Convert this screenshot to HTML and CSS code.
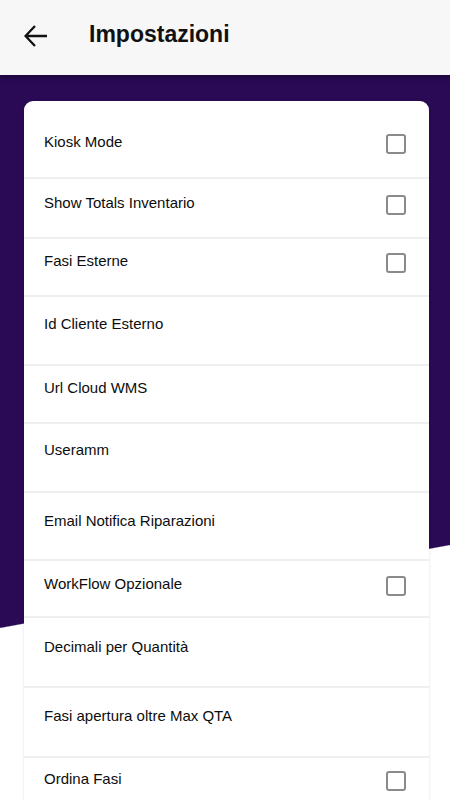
FILE: index.html
```
<!DOCTYPE html>
<html lang="it">
<head>
<meta charset="utf-8">
<title>Impostazioni</title>
<link rel="stylesheet" href="styles.css">
</head>
<body>
<header class="topbar">
  <svg class="back" width="24" height="24" viewBox="0 0 24 24" aria-hidden="true">
    <path d="M1.5 12H23M11 2L1.5 12L11 22" fill="none" stroke="#111" stroke-width="2.3"/>
  </svg>
  <h1 class="title">Impostazioni</h1>
</header>
<main class="main">
  <section class="card">
    <div class="row"><span class="label">Kiosk Mode</span><span class="check"></span></div>
    <div class="row"><span class="label">Show Totals Inventario</span><span class="check"></span></div>
    <div class="row"><span class="label">Fasi Esterne</span><span class="check"></span></div>
    <div class="row"><span class="label">Id Cliente Esterno</span></div>
    <div class="row"><span class="label">Url Cloud WMS</span></div>
    <div class="row"><span class="label">Useramm</span></div>
    <div class="row"><span class="label">Email Notifica Riparazioni</span></div>
    <div class="row"><span class="label">WorkFlow Opzionale</span><span class="check"></span></div>
    <div class="row"><span class="label">Decimali per Quantità</span></div>
    <div class="row"><span class="label">Fasi apertura oltre Max QTA</span></div>
    <div class="row"><span class="label">Ordina Fasi</span><span class="check"></span></div>
  </section>
</main>
</body>
</html>
```
FILE: styles.css
```
html, body {
  margin: 0;
  padding: 0;
}
body {
  font-family: "Liberation Sans", Arial, sans-serif;
  background: #fff;
  overflow: hidden;
}
.topbar {
  position: relative;
  z-index: 1;
  height: 75px;
  box-sizing: border-box;
  padding: 0 0 3px 24px;
  display: flex;
  align-items: center;
  background: #f7f7f7;
  box-shadow: 0 2px 6px rgba(0, 0, 0, 0.4);
}
.back {
  display: block;
  flex: none;
}
.title {
  margin: 0 0 3px 41px;
  font-size: 23px;
  font-weight: bold;
  color: #111;
  line-height: normal;
}
.main {
  min-height: 725px;
  padding-top: 26px;
  background:
    linear-gradient(to bottom right, #2a0a55 calc(50% - 0.6px), #ffffff calc(50% + 0.6px)) 0 470px / 100% 83px no-repeat,
    linear-gradient(#2a0a55, #2a0a55) 0 0 / 100% 470px no-repeat,
    #fff;
}
.card {
  margin: 0 21px 0 24px;
  padding-top: 20px;
  background: #fff;
  border-radius: 9px 9px 0 0;
  box-shadow: 0 0 3px rgba(0, 0, 0, 0.12);
}
.row {
  display: flex;
  justify-content: space-between;
  align-items: flex-start;
  box-sizing: border-box;
  padding: 0 23px 0 20px;
  border-top: 2px solid #efefef;
}
.row:first-child { border-top: 0; height: 56px; padding-top: 12px; }
.row:nth-child(2) { height: 60px; padding-top: 15px; }
.row:nth-child(3) { height: 58px; padding-top: 13px; }
.row:nth-child(4) { height: 69px; padding-top: 18px; }
.row:nth-child(5) { height: 58px; padding-top: 13px; }
.row:nth-child(6) { height: 69px; padding-top: 17px; }
.row:nth-child(7) { height: 68px; padding-top: 19px; }
.row:nth-child(8) { height: 57px; padding-top: 14px; }
.row:nth-child(9) { height: 70px; padding-top: 20px; }
.row:nth-child(10) { height: 70px; padding-top: 19px; }
.row:nth-child(11) { height: 60px; padding-top: 12px; }
.label {
  font-size: 15px;
  line-height: 18px;
  color: #0d0d0d;
}
.check {
  flex: none;
  width: 20px;
  height: 20px;
  box-sizing: border-box;
  margin-top: 1px;
  border: 2px solid #8a8a8a;
  border-radius: 3px;
  background: #fff;
}
```
